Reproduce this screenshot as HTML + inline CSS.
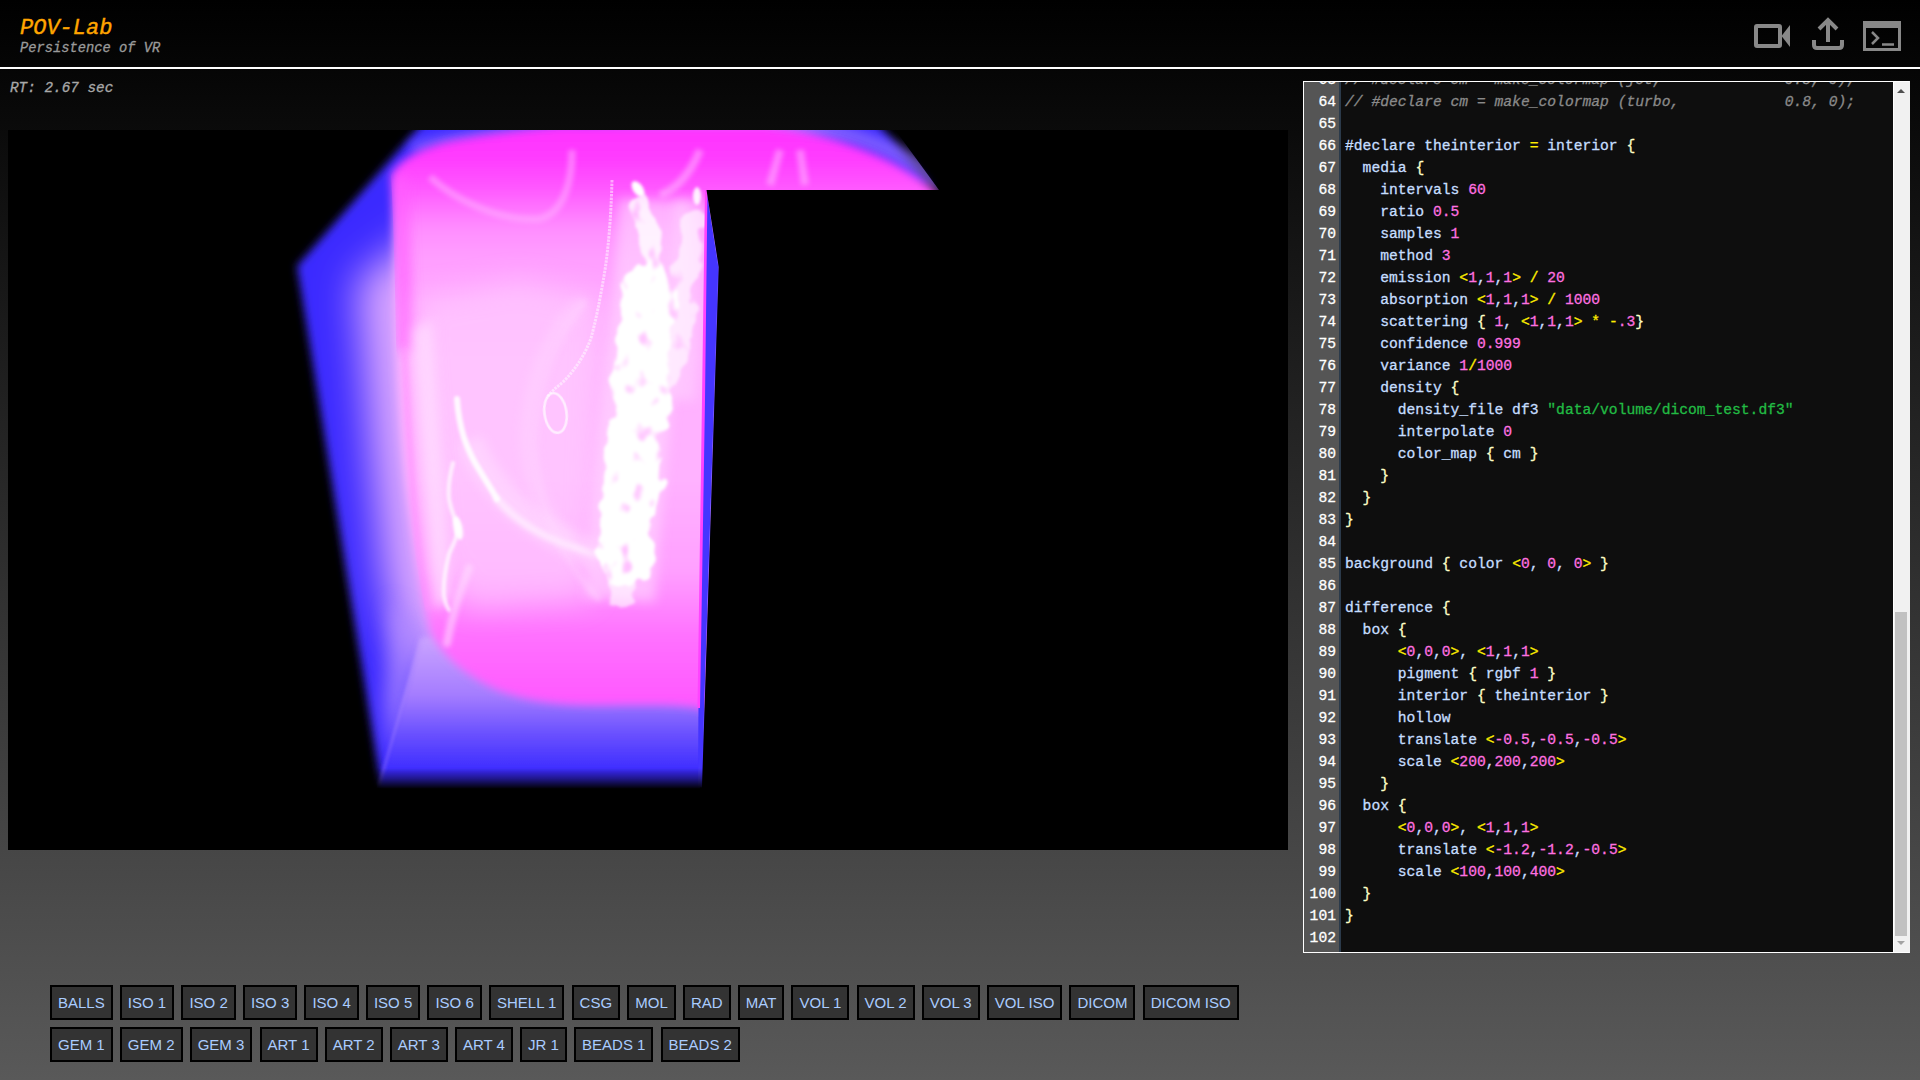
<!DOCTYPE html>
<html lang="en">
<head>
<meta charset="utf-8">
<title>POV-Lab</title>
<style>
html,body{margin:0;padding:0;}
body{width:1920px;height:1080px;overflow:hidden;position:relative;background:linear-gradient(to bottom,#000,#595959);font-family:"Liberation Mono","DejaVu Sans Mono",monospace;}
#hdr{position:absolute;left:0;top:0;width:1920px;height:67px;border-bottom:2px solid #fff;}
#title{-webkit-text-stroke:0.4px currentColor;position:absolute;left:20px;top:16px;font-size:22px;line-height:26px;font-style:italic;color:#ffa500;letter-spacing:0;white-space:pre;}
#sub{-webkit-text-stroke:0.3px currentColor;position:absolute;left:20px;top:41px;font-size:13.75px;line-height:16px;font-style:italic;color:#9a9a9a;white-space:pre;}
#rt{-webkit-text-stroke:0.3px currentColor;position:absolute;left:10px;top:80px;font-size:14.35px;line-height:16px;font-style:italic;color:#a8a8a8;white-space:pre;}
.ico{position:absolute;top:0;}
#view{position:absolute;left:8px;top:130px;width:1280px;height:720px;background:#000;overflow:hidden;}
#view svg{display:block;}
#ed{position:absolute;left:1303px;top:81px;width:605px;height:870px;border:1px solid #fff;border-right-color:#f1f1f1;background:#0e0e0e;overflow:hidden;}
#gut{position:absolute;left:0;top:0;width:35px;height:870px;background:#555;border-right:2px solid #2b3a4a;}
#lines{position:absolute;left:0;top:-13.5px;width:588px;}
.ln{height:22px;line-height:22px;font-size:14.667px;white-space:pre;color:#c6deff;position:relative;-webkit-text-stroke:0.3px currentColor;}
.no{position:absolute;left:0;width:32px;text-align:right;color:#fff;}
.cd{position:absolute;left:41px;}
.c{color:#8a8a8a;font-style:italic;}
.p{color:#ffee00;}
.b{color:#ffffc8;}
.n{color:#ff70e0;}
.s{color:#22bb44;}
#sb{position:absolute;left:589px;top:0;width:16px;height:870px;background:#f1f1f1;border-left:1px solid #fff;}
#thumb{position:absolute;left:1px;top:530px;width:12px;height:324px;background:#c1c1c1;}
.arr{position:absolute;left:3px;width:0;height:0;border-left:4px solid transparent;border-right:4px solid transparent;}
#au{top:7px;border-bottom:4px solid #505050;}
#ad{top:859px;border-top:4px solid #a3a3a3;}
.row{position:absolute;left:50px;height:35px;display:flex;gap:7.17px;}
.row button{box-sizing:border-box;height:35px;margin:0;padding:0 6px;border:2px solid #000;background:#333;color:#aaccff;font-family:"Liberation Sans",Arial,sans-serif;font-size:15px;line-height:17px;border-radius:0;white-space:pre;}
#r1{top:985px;}
#r2{top:1027px;}
</style>
</head>
<body>
<div id="hdr">
<div id="title">POV-Lab</div>
<div id="sub">Persistence of VR</div>
<svg class="ico" style="left:1750px" width="160" height="67" viewBox="1750 0 160 67" fill="none" stroke="#888" stroke-width="4">
<rect x="1756" y="26" width="24" height="20" rx="1"/>
<path d="M1781.500 36 L1790 25 V47 Z" fill="#888" stroke="none"/>
<path d="M1828 42 V22 M1819 29 L1828 20 L1837 29" stroke-linecap="butt"/>
<path d="M1814 40 V45 Q1814 48 1817 48 H1839 Q1842 48 1842 45 V40"/>
<rect x="1864.5" y="22.5" width="35" height="27" stroke-width="3"/>
<rect x="1863" y="21" width="38" height="7" fill="#888" stroke="none"/>
<path d="M1872 32 L1878 38 L1872 44" stroke-width="2.5"/>
<path d="M1882 44.500 H1894" stroke-width="2.5"/>
</svg>
</div>
<div id="rt">RT: 2.67 sec</div>
<div id="view"><svg width="1280" height="720" viewBox="8 130 1280 720">
<defs>
<filter id="b4" filterUnits="userSpaceOnUse" x="0" y="60" width="1300" height="820"><feGaussianBlur stdDeviation="4"/></filter>
<filter id="b3" filterUnits="userSpaceOnUse" x="0" y="60" width="1300" height="820"><feGaussianBlur stdDeviation="2.5"/></filter>
<filter id="b5" filterUnits="userSpaceOnUse" x="0" y="60" width="1300" height="820"><feGaussianBlur stdDeviation="4.5"/></filter>
<filter id="b2" filterUnits="userSpaceOnUse" x="0" y="60" width="1300" height="820"><feGaussianBlur stdDeviation="1.5"/></filter>
<filter id="b1" filterUnits="userSpaceOnUse" x="0" y="60" width="1300" height="820"><feGaussianBlur stdDeviation="0.7"/></filter>
<filter id="b6" filterUnits="userSpaceOnUse" x="0" y="60" width="1300" height="820"><feGaussianBlur stdDeviation="6"/></filter>
<filter id="b20" filterUnits="userSpaceOnUse" x="0" y="60" width="1300" height="820"><feGaussianBlur stdDeviation="20"/></filter>
<filter id="b15" filterUnits="userSpaceOnUse" x="0" y="60" width="1300" height="820"><feGaussianBlur stdDeviation="14"/></filter>
<filter id="b10" filterUnits="userSpaceOnUse" x="0" y="60" width="1300" height="820"><feGaussianBlur stdDeviation="10"/></filter>
<filter id="spf" filterUnits="userSpaceOnUse" x="540" y="120" width="220" height="560">
<feTurbulence type="fractalNoise" baseFrequency="0.05 0.04" numOctaves="2" seed="7" result="n"/>
<feTurbulence type="fractalNoise" baseFrequency="0.06 0.045" numOctaves="2" seed="11" result="h"/>
<feDisplacementMap in="SourceGraphic" in2="n" scale="24" xChannelSelector="R" yChannelSelector="G" result="d"/>
<feColorMatrix in="h" type="matrix" values="0 0 0 0 1  0 0 0 0 1  0 0 0 0 1  0 0 0 6 -1.35" result="m"/>
<feComposite in="d" in2="m" operator="in" result="c"/>
<feGaussianBlur in="c" stdDeviation="1.8"/>
</filter>
<clipPath id="boxclip"><polygon points="400,120 888,120 939,190 707,190 718.75,267 702,788 377,788 291,265"/></clipPath>
<clipPath id="bodyclip"><path d="M391,175 C398,160 420,148 450,141 C490,133 530,129 560,126 L765,126 C835,134 898,158 934,190 L944,204 L716,204 L713,400 L708,712 L698,708 C670,703 620,706 580,705 C550,704 518,699 495,689 C468,676 442,658 430,630 C420,590 412,540 405,480 C400,430 397,380 396,340 C395,290 394,230 391,175 Z"/></clipPath>
<linearGradient id="gpink" gradientUnits="userSpaceOnUse" x1="0" y1="130" x2="0" y2="710">
<stop offset="0" stop-color="#ff33ff"/>
<stop offset="0.05" stop-color="#ff3cff"/>
<stop offset="0.10" stop-color="#ff58ff"/>
<stop offset="0.17" stop-color="#ff8eff"/>
<stop offset="0.22" stop-color="#ff9eff"/>
<stop offset="0.30" stop-color="#ffaaff"/>
<stop offset="0.40" stop-color="#ffb2ff"/>
<stop offset="0.60" stop-color="#ffb2ff"/>
<stop offset="0.76" stop-color="#ffa0ff"/>
<stop offset="0.87" stop-color="#ff72ff"/>
<stop offset="1" stop-color="#ff55ff"/>
</linearGradient>
<linearGradient id="gface" gradientUnits="userSpaceOnUse" x1="0" y1="640" x2="0" y2="772">
<stop offset="0" stop-color="#c9a2ff"/>
<stop offset="0.42" stop-color="#a47cff"/>
<stop offset="0.70" stop-color="#6c52ff"/>
<stop offset="1" stop-color="#3b2bff"/>
</linearGradient>
<linearGradient id="gbot" gradientUnits="userSpaceOnUse" x1="0" y1="768" x2="0" y2="789">
<stop offset="0" stop-color="#000" stop-opacity="0"/>
<stop offset="0.5" stop-color="#000" stop-opacity="0.45"/>
<stop offset="1" stop-color="#000" stop-opacity="1"/>
</linearGradient>
</defs>
<rect x="8" y="130" width="1280" height="720" fill="#000"/>
<!-- blue box -->
<polygon filter="url(#b4)" fill="#3b2bff" points="427,118 873,118 931,186 724,186 724,267 708,790 382,790 297,266"/>
<g clip-path="url(#boxclip)">
<!-- inner violet glow: thickness of the medium -->
<polygon filter="url(#b20)" fill="#d8a4ff" points="540,150 700,110 800,110 850,240 700,240 700,690 450,690 396,640 382,575 370,455 356,280"/>
<polygon filter="url(#b10)" fill="#b48cff" opacity="0.75" points="392,600 424,630 408,705 392,762 384,700"/>
<polygon filter="url(#b3)" fill="url(#gface)" points="421,637 720,637 720,792 377,792"/>
<path filter="url(#b6)" fill="none" stroke="#8868ff" stroke-width="14" opacity="0.7" d="M412,150 C440,140 500,132 580,126"/>
<path filter="url(#b6)" fill="none" stroke="#9a74ff" stroke-width="16" opacity="0.7" d="M775,122 C845,128 908,150 942,186"/>
<!-- crease of the back bottom-left edge -->
<path filter="url(#b2)" d="M379,786 L421,640" stroke="#c9a0ff" stroke-width="3" opacity="0.25" fill="none"/>
</g>
<!-- pink body -->
<g clip-path="url(#boxclip)">
<path filter="url(#b5)" fill="url(#gpink)" d="M391,175 C398,160 420,148 450,141 C490,133 530,129 560,126 L765,126 C835,134 898,158 934,190 L944,204 L716,204 L713,400 L708,712 L698,708 C670,703 620,706 580,705 C550,704 518,699 495,689 C468,676 442,658 430,630 C420,590 412,540 405,480 C400,430 397,380 396,340 C395,290 394,230 391,175 Z"/>
</g>
<g clip-path="url(#bodyclip)">
<path filter="url(#b6)" fill="none" stroke="#ff5cff" stroke-width="16" opacity="0.7" d="M400,178 C402,240 404,300 406,350"/>
<path filter="url(#b3)" fill="none" stroke="#ff8cff" stroke-width="7" opacity="0.6" d="M405,350 C407,400 410,450 414,500 C418,540 422,575 428,610"/>
<!-- light interior -->
<path filter="url(#b15)" fill="#ffd6ff" opacity="0.5" d="M415,300 L520,280 L600,300 L590,600 L470,610 L435,560 Z"/>
<path filter="url(#b6)" fill="#ffe0ff" opacity="0.7" d="M412,330 L432,320 L452,600 L434,610 Z"/>
<!-- shoulder arcs -->
<path filter="url(#b3)" fill="none" stroke="#ffb0ff" stroke-width="7" opacity="0.55" d="M430,177 C455,200 500,222 540,219 C565,212 572,180 572,150"/>
<path filter="url(#b3)" fill="none" stroke="#ffc8ff" stroke-width="6" opacity="0.5" d="M585,300 C560,330 540,380 535,440 C535,500 560,560 600,600"/>
<path filter="url(#b3)" fill="none" stroke="#ffc0ff" stroke-width="8" opacity="0.5" d="M700,150 C690,175 675,190 660,195 M780,150 L770,185 M800,150 L805,185"/>
<!-- pelvis / rib highlights -->
<path filter="url(#b6)" fill="none" stroke="#ffe4ff" stroke-width="26" opacity="0.45" d="M470,440 C490,490 530,530 598,556"/>
<path filter="url(#b2)" fill="none" stroke="#fff" stroke-width="6" opacity="0.9" stroke-linecap="round" d="M457,399 C458,415 461,428 464,438 C469,452 474,462 480,471 C486,481 492,490 497,499"/>
<path filter="url(#b3)" fill="none" stroke="#fff" stroke-width="7" opacity="0.55" stroke-linecap="round" d="M497,499 C515,520 535,532 555,540 C570,546 585,551 596,555"/>
<path filter="url(#b2)" fill="none" stroke="#fff" stroke-width="4" opacity="0.75" stroke-linecap="round" d="M453,463 C449,478 448,490 449,499 C451,512 456,520 458,527 C458,538 452,546 449,554 C445,570 443,584 444,596 C445,603 447,607 449,610"/>
<ellipse filter="url(#b2)" cx="458" cy="528" rx="4.500" ry="12" fill="#fff" opacity="0.95" transform="rotate(-12 458 528)"/>
<path filter="url(#b3)" fill="none" stroke="#ffe0ff" stroke-width="8" opacity="0.55" stroke-linecap="round" d="M469,568 C460,590 452,615 447,643"/>
<path filter="url(#b6)" fill="none" stroke="#ffdcff" stroke-width="14" opacity="0.4" d="M585,300 C550,330 530,380 528,440 C530,480 545,520 570,545"/>
<!-- spine -->
<path filter="url(#b6)" fill="none" stroke="#ffd8ff" stroke-width="70" opacity="0.6" d="M654,200 C652,260 645,330 637,400 C630,470 624,530 620,600"/>
<path filter="url(#b6)" fill="none" stroke="#ffd0ff" stroke-width="30" opacity="0.6" d="M690,200 C690,260 686,330 680,400"/>
<g filter="url(#spf)">
<path fill="none" stroke="#fff" stroke-width="54" stroke-linecap="round" d="M650,290 C646,340 641,390 635,440 C630,490 626,530 625,556"/>
<path fill="none" stroke="#fff" stroke-opacity="0.6" stroke-width="22" stroke-linecap="round" d="M692,225 C690,270 682,320 668,380"/>
<path fill="none" stroke="#fff" stroke-opacity="0.8" stroke-width="20" stroke-linecap="round" d="M640,205 C650,235 654,260 652,290"/>
<path fill="none" stroke="#fff" stroke-opacity="0.6" stroke-width="22" stroke-linecap="round" d="M625,556 C623,580 622,590 622,600"/>
</g>
<ellipse filter="url(#b2)" cx="638" cy="189" rx="5" ry="9" fill="#fff" transform="rotate(-35 638 189)"/>
<ellipse filter="url(#b2)" cx="697" cy="196" rx="4" ry="9" fill="#fff" opacity="0.9"/>
<!-- catheter + loop -->
<path filter="url(#b1)" fill="none" stroke="#fff" stroke-width="3" opacity="0.5" stroke-dasharray="2.5 1" d="M612,180 C611,220 608,250 605,270 C600,300 596,320 591,338 C585,355 575,370 563,382 C556,388 550,392 547,398"/>
<ellipse filter="url(#b1)" cx="555.500" cy="413" rx="11" ry="20" fill="none" stroke="#fff" stroke-width="2.6" opacity="0.7" transform="rotate(-8 555.500 413)"/>
</g>
<!-- right strip -->
<polygon filter="url(#b1)" fill="#4434ff" points="706.500,190 718.250,267 701.500,788 698,788 698.500,700 703,400"/>
<polygon fill="#ff44ff" points="705,190 707.500,190 705,400 700,708 697.500,708 702,400"/>
<rect x="280" y="760" width="440" height="50" fill="url(#gbot)"/>
<!-- black cutout -->
<polygon fill="#000" points="706.500,190 1290,190 1290,852 700,852 700,787.500 702,787.500 718.750,267"/>
</svg>
</div>
<div id="ed">
<div id="gut"></div>
<div id="lines">
<div class="ln"><span class="no">63</span><span class="cd"><span class="c">// #declare cm = make_colormap (jet,              0.8, 0);</span></span></div>
<div class="ln"><span class="no">64</span><span class="cd"><span class="c">// #declare cm = make_colormap (turbo,            0.8, 0);</span></span></div>
<div class="ln"><span class="no">65</span><span class="cd"></span></div>
<div class="ln"><span class="no">66</span><span class="cd">#declare theinterior <span class="p">=</span> interior <span class="b">{</span></span></div>
<div class="ln"><span class="no">67</span><span class="cd">  media <span class="b">{</span></span></div>
<div class="ln"><span class="no">68</span><span class="cd">    intervals <span class="n">60</span></span></div>
<div class="ln"><span class="no">69</span><span class="cd">    ratio <span class="n">0.5</span></span></div>
<div class="ln"><span class="no">70</span><span class="cd">    samples <span class="n">1</span></span></div>
<div class="ln"><span class="no">71</span><span class="cd">    method <span class="n">3</span></span></div>
<div class="ln"><span class="no">72</span><span class="cd">    emission <span class="p">&lt;</span><span class="n">1</span>,<span class="n">1</span>,<span class="n">1</span><span class="p">&gt;</span> <span class="p">/</span> <span class="n">20</span></span></div>
<div class="ln"><span class="no">73</span><span class="cd">    absorption <span class="p">&lt;</span><span class="n">1</span>,<span class="n">1</span>,<span class="n">1</span><span class="p">&gt;</span> <span class="p">/</span> <span class="n">1000</span></span></div>
<div class="ln"><span class="no">74</span><span class="cd">    scattering <span class="b">{</span> <span class="n">1</span>, <span class="p">&lt;</span><span class="n">1</span>,<span class="n">1</span>,<span class="n">1</span><span class="p">&gt;</span> <span class="p">*</span> <span class="p">-</span><span class="n">.3</span><span class="b">}</span></span></div>
<div class="ln"><span class="no">75</span><span class="cd">    confidence <span class="n">0.999</span></span></div>
<div class="ln"><span class="no">76</span><span class="cd">    variance <span class="n">1</span><span class="p">/</span><span class="n">1000</span></span></div>
<div class="ln"><span class="no">77</span><span class="cd">    density <span class="b">{</span></span></div>
<div class="ln"><span class="no">78</span><span class="cd">      density_file df3 <span class="s">&quot;data/volume/dicom_test.df3&quot;</span></span></div>
<div class="ln"><span class="no">79</span><span class="cd">      interpolate <span class="n">0</span></span></div>
<div class="ln"><span class="no">80</span><span class="cd">      color_map <span class="b">{</span> cm <span class="b">}</span></span></div>
<div class="ln"><span class="no">81</span><span class="cd">    <span class="b">}</span></span></div>
<div class="ln"><span class="no">82</span><span class="cd">  <span class="b">}</span></span></div>
<div class="ln"><span class="no">83</span><span class="cd"><span class="b">}</span></span></div>
<div class="ln"><span class="no">84</span><span class="cd"></span></div>
<div class="ln"><span class="no">85</span><span class="cd">background <span class="b">{</span> color <span class="p">&lt;</span><span class="n">0</span>, <span class="n">0</span>, <span class="n">0</span><span class="p">&gt;</span> <span class="b">}</span></span></div>
<div class="ln"><span class="no">86</span><span class="cd"></span></div>
<div class="ln"><span class="no">87</span><span class="cd">difference <span class="b">{</span></span></div>
<div class="ln"><span class="no">88</span><span class="cd">  box <span class="b">{</span></span></div>
<div class="ln"><span class="no">89</span><span class="cd">      <span class="p">&lt;</span><span class="n">0</span>,<span class="n">0</span>,<span class="n">0</span><span class="p">&gt;</span>, <span class="p">&lt;</span><span class="n">1</span>,<span class="n">1</span>,<span class="n">1</span><span class="p">&gt;</span></span></div>
<div class="ln"><span class="no">90</span><span class="cd">      pigment <span class="b">{</span> rgbf <span class="n">1</span> <span class="b">}</span></span></div>
<div class="ln"><span class="no">91</span><span class="cd">      interior <span class="b">{</span> theinterior <span class="b">}</span></span></div>
<div class="ln"><span class="no">92</span><span class="cd">      hollow</span></div>
<div class="ln"><span class="no">93</span><span class="cd">      translate <span class="p">&lt;</span><span class="n">-0.5</span>,<span class="n">-0.5</span>,<span class="n">-0.5</span><span class="p">&gt;</span></span></div>
<div class="ln"><span class="no">94</span><span class="cd">      scale <span class="p">&lt;</span><span class="n">200</span>,<span class="n">200</span>,<span class="n">200</span><span class="p">&gt;</span></span></div>
<div class="ln"><span class="no">95</span><span class="cd">    <span class="b">}</span></span></div>
<div class="ln"><span class="no">96</span><span class="cd">  box <span class="b">{</span></span></div>
<div class="ln"><span class="no">97</span><span class="cd">      <span class="p">&lt;</span><span class="n">0</span>,<span class="n">0</span>,<span class="n">0</span><span class="p">&gt;</span>, <span class="p">&lt;</span><span class="n">1</span>,<span class="n">1</span>,<span class="n">1</span><span class="p">&gt;</span></span></div>
<div class="ln"><span class="no">98</span><span class="cd">      translate <span class="p">&lt;</span><span class="n">-1.2</span>,<span class="n">-1.2</span>,<span class="n">-0.5</span><span class="p">&gt;</span></span></div>
<div class="ln"><span class="no">99</span><span class="cd">      scale <span class="p">&lt;</span><span class="n">100</span>,<span class="n">100</span>,<span class="n">400</span><span class="p">&gt;</span></span></div>
<div class="ln"><span class="no">100</span><span class="cd">  <span class="b">}</span></span></div>
<div class="ln"><span class="no">101</span><span class="cd"><span class="b">}</span></span></div>
<div class="ln"><span class="no">102</span><span class="cd"></span></div>
</div>
<div id="sb"><div class="arr" id="au"></div><div id="thumb"></div><div class="arr" id="ad"></div></div>
</div>
<div class="row" id="r1"><button>BALLS</button><button>ISO 1</button><button>ISO 2</button><button>ISO 3</button><button>ISO 4</button><button>ISO 5</button><button>ISO 6</button><button>SHELL 1</button><button>CSG</button><button>MOL</button><button>RAD</button><button>MAT</button><button>VOL 1</button><button>VOL 2</button><button>VOL 3</button><button>VOL ISO</button><button>DICOM</button><button>DICOM ISO</button></div>
<div class="row" id="r2"><button>GEM 1</button><button>GEM 2</button><button>GEM 3</button><button>ART 1</button><button>ART 2</button><button>ART 3</button><button>ART 4</button><button>JR 1</button><button>BEADS 1</button><button>BEADS 2</button></div>
</body>
</html>
